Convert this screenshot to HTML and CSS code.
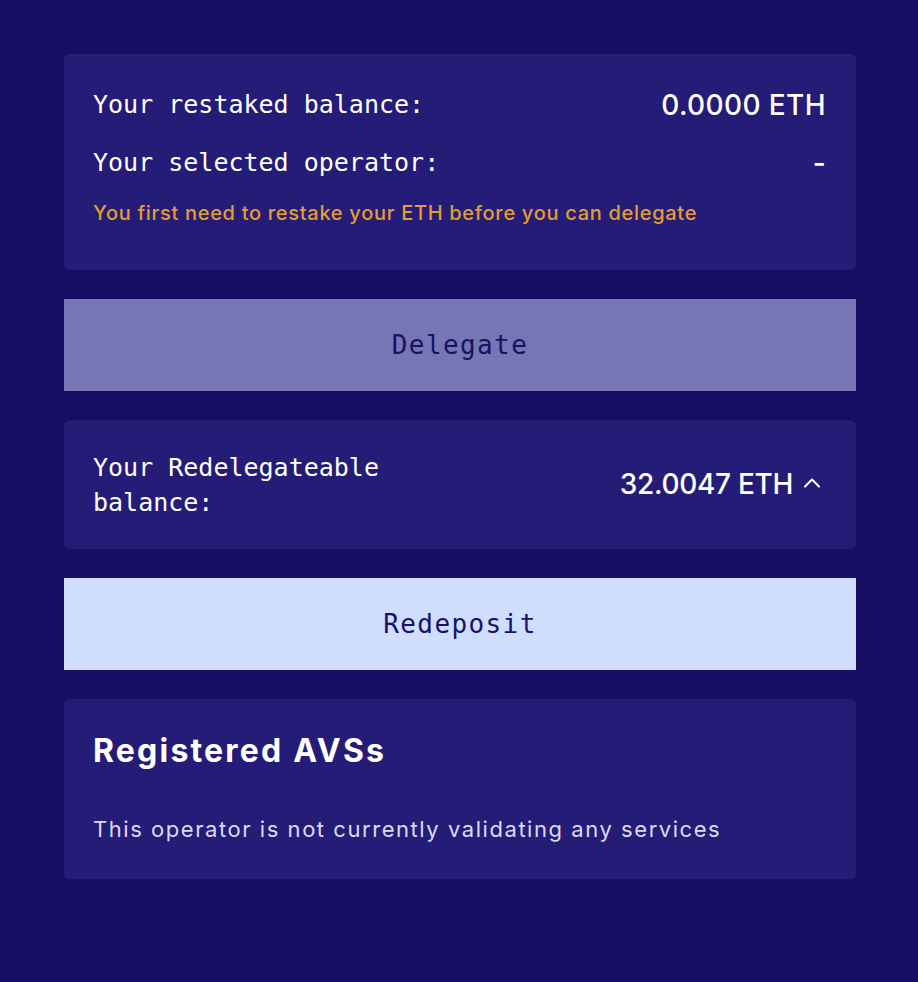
FILE: index.html
```html
<!DOCTYPE html>
<html lang="en">
<head>
<meta charset="utf-8">
<title>Restake</title>
<link rel="stylesheet" href="styles.css">
</head>
<body>
<main class="panel">
  <section class="card card-balance">
    <div class="row">
      <span class="label">Your restaked balance:</span>
      <span class="value">0.0000 ETH</span>
    </div>
    <div class="row row-second">
      <span class="label">Your selected operator:</span>
      <span class="value">-</span>
    </div>
    <p class="warning">You first need to restake your ETH before you can delegate</p>
  </section>

  <button class="btn btn-disabled" type="button">Delegate</button>

  <section class="card card-redelegate">
    <div class="row">
      <span class="label label-wrap">Your Redelegateable balance:</span>
      <span class="value value-toggle">32.0047 ETH
        <svg class="chevron" width="18" height="11" viewBox="0 0 18 11" aria-hidden="true"><path d="M2 9.5 L9 2.5 L16 9.5" fill="none" stroke="#ffffff" stroke-width="2" stroke-linecap="round" stroke-linejoin="round"/></svg>
      </span>
    </div>
  </section>

  <button class="btn btn-light" type="button">Redeposit</button>

  <section class="card card-avs">
    <h2 class="avs-title">Registered AVSs</h2>
    <p class="avs-text">This operator is not currently validating any services</p>
  </section>
</main>
</body>
</html>
```

FILE: styles.css
```css
html, body {
  margin: 0;
  padding: 0;
  background: #170e64;
}

body {
  min-height: 982px;
  font-family: Inter, "Noto Sans", sans-serif;
  color: #ffffff;
}

.panel {
  width: 792px;
  margin-left: 64px;
  padding-top: 54px;
  display: flex;
  flex-direction: column;
  gap: 29px;
}

.card {
  background: #251c77;
  border-radius: 6px;
  padding: 30px 30px 30px 29px;
}

.card-balance {
  padding-top: 33px;
}

.card-redelegate {
  padding-bottom: 29px;
}

.row {
  display: flex;
  justify-content: space-between;
  align-items: center;
}

.row-second {
  margin-top: 22px;
}

.label {
  font-family: "DejaVu Sans Mono", "Liberation Mono", monospace;
  font-size: 25px;
  line-height: 36px;
  color: #ffffff;
}

.label-wrap {
  width: 300px;
  line-height: 35px;
}

.value {
  font-family: Inter, "Noto Sans", sans-serif;
  font-size: 28px;
  font-weight: 500;
  letter-spacing: 0.4px;
  line-height: 36px;
  color: #ffffff;
}

.value-toggle {
  display: flex;
  align-items: center;
  gap: 10px;
  letter-spacing: -0.3px;
  margin-bottom: 3px;
}

.chevron {
  display: block;
  margin-top: -2px;
  margin-right: 5px;
}

.warning {
  margin: 17px 0 12px;
  font-size: 20px;
  line-height: 30px;
  font-weight: 500;
  letter-spacing: 0.7px;
  color: #e39d33;
}

.btn {
  display: block;
  width: 100%;
  height: 92px;
  border: 0;
  border-radius: 0;
  font-family: "DejaVu Sans Mono", "Liberation Mono", monospace;
  font-size: 26px;
  letter-spacing: 1.4px;
  color: #1a1166;
  cursor: pointer;
}

.btn-disabled {
  background: #7576b3;
}

.btn-light {
  background: #cedefc;
}

.card-avs {
  padding-top: 30px;
  padding-bottom: 33px;
}

.avs-title {
  margin: 0;
  font-size: 32px;
  line-height: 44px;
  font-weight: 700;
  letter-spacing: 2.2px;
  color: #ffffff;
}

.avs-text {
  margin: 39px 0 0;
  font-size: 22px;
  line-height: 34px;
  letter-spacing: 1.55px;
  color: #dcdaf2;
}
```
